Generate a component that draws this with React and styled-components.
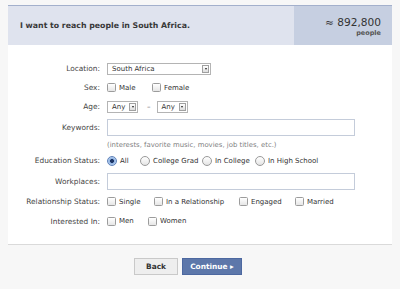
import React from 'react'
import styled, { createGlobalStyle } from 'styled-components'

const GlobalStyle = createGlobalStyle`
body {
  margin: 0;
  background: #f7f7f7;
  font-family: "DejaVu Sans", "Liberation Sans", sans-serif;
}
`

const Page = styled.div`
padding: 5px 8px 0;
`
const Panel = styled.div`
background: #fff;
border-bottom: 1px solid #dadada;
`
const Header = styled.div`
display: flex;
height: 39px;
border-top: 1px solid #a3b0cc;
`
const Headline = styled.div`
flex: 1;
display: flex;
align-items: center;
padding-left: 12px;
background: #dfe3ee;
font-size: 7.8px;
font-weight: bold;
color: #383838;
`
const Reach = styled.div`
width: 98px;
box-sizing: border-box;
padding: 1px 11px 0 0;
display: flex;
flex-direction: column;
align-items: flex-end;
justify-content: center;
background: #c6cfe1;
`
const Count = styled.div`
font-size: 10.6px;
color: #333;
line-height: 14px;
`
const Unit = styled.div`
font-size: 6.5px;
font-weight: bold;
color: #555;
line-height: 9px;
`
const Form = styled.div`
padding: 14px 0 13px;
`
const Row = styled.div`
display: grid;
grid-template-columns: 92px 1fr;
column-gap: 7px;
align-items: center;
height: ${p => p.h || 19}px;
`
const Label = styled.div`
text-align: right;
font-size: 7.4px;
color: #444;
`
const Controls = styled.div`
display: flex;
align-items: center;
font-size: 7px;
color: #333;
`
const Hint = styled.div`
font-size: 6.9px;
color: #808080;
`
const Option = styled.label`
display: flex;
align-items: center;
flex: none;
width: ${p => p.w ? p.w + 'px' : 'auto'};
`
const Box = styled.span`
width: 9px;
height: 9px;
box-sizing: border-box;
margin-right: 3px;
border: 1px solid #9c9c9c;
border-radius: 1.5px;
background: linear-gradient(#ffffff, #e6e6e6);
`
const Radio = styled.span`
width: 10px;
height: 10px;
box-sizing: border-box;
margin-right: 3px;
border-radius: 50%;
border: 1px solid ${p => p.on ? '#5f82b9' : '#9a9a9a'};
background: ${p => p.on
  ? 'radial-gradient(circle, #1c3566 0 1.6px, #8fb3e3 2.3px, #d6e5f7 100%)'
  : 'linear-gradient(#ffffff, #e4e4e4)'};
`
const Select = styled.div`
width: ${p => p.w}px;
height: 12px;
box-sizing: border-box;
display: flex;
align-items: center;
justify-content: space-between;
padding: 0 1px 0 4px;
border: 1px solid #b4b4b4;
background: #fff;
`
const Arrow = styled.span`
width: 7px;
height: 8px;
box-sizing: border-box;
border: 1px solid #a0a0a0;
background: linear-gradient(#fff, #ddd);
display: flex;
align-items: center;
justify-content: center;
&::after {
  content: "";
  border-left: 1.5px solid transparent;
  border-right: 1.5px solid transparent;
  border-top: 2px solid #222;
}
`
const Dash = styled.span`
margin: 0 6px 0 9px;
color: #555;
`
const Field = styled.div`
width: 248px;
height: 17px;
box-sizing: border-box;
border: 1px solid #c4ccda;
background: #fff;
`
const Footer = styled.div`
display: flex;
gap: 4px;
padding: 13px 0 0 126px;
`
const Button = styled.div`
width: ${p => p.w}px;
height: 17px;
box-sizing: border-box;
display: flex;
align-items: center;
justify-content: center;
font-size: 7.4px;
font-weight: bold;
color: ${p => p.primary ? '#fff' : '#333'};
background: ${p => p.primary ? '#5d77aa' : '#eeeeee'};
border: 1px solid ${p => p.primary ? '#4d68a0' : '#c9c9c9'};
`

const Check = ({ w, children }) => (
  <Option w={w}><Box />{children}</Option>
)

const Choice = ({ w, on, children }) => (
  <Option w={w}><Radio on={on} />{children}</Option>
)

const App = () => {
  return (
    <Page>
      <GlobalStyle />
      <Panel>
        <Header>
          <Headline>I want to reach people in South Africa.</Headline>
          <Reach>
            <Count>≈ 892,800</Count>
            <Unit>people</Unit>
          </Reach>
        </Header>
        <Form>
          <Row>
            <Label>Location:</Label>
            <Controls><Select w={104}>South Africa<Arrow /></Select></Controls>
          </Row>
          <Row>
            <Label>Sex:</Label>
            <Controls>
              <Check w={45}>Male</Check>
              <Check>Female</Check>
            </Controls>
          </Row>
          <Row>
            <Label>Age:</Label>
            <Controls>
              <Select w={31}>Any<Arrow /></Select>
              <Dash>–</Dash>
              <Select w={31}>Any<Arrow /></Select>
            </Controls>
          </Row>
          <Row h={22}>
            <Label>Keywords:</Label>
            <Controls><Field /></Controls>
          </Row>
          <Row h={13}>
            <span />
            <Hint>(interests, favorite music, movies, job titles, etc.)</Hint>
          </Row>
          <Row>
            <Label>Education Status:</Label>
            <Controls>
              <Choice w={33} on>All</Choice>
              <Choice w={62}>College Grad</Choice>
              <Choice w={53}>In College</Choice>
              <Choice>In High School</Choice>
            </Controls>
          </Row>
          <Row h={22}>
            <Label>Workplaces:</Label>
            <Controls><Field /></Controls>
          </Row>
          <Row>
            <Label>Relationship Status:</Label>
            <Controls>
              <Check w={47}>Single</Check>
              <Check w={85}>In a Relationship</Check>
              <Check w={56}>Engaged</Check>
              <Check>Married</Check>
            </Controls>
          </Row>
          <Row h={20}>
            <Label>Interested In:</Label>
            <Controls>
              <Check w={41}>Men</Check>
              <Check>Women</Check>
            </Controls>
          </Row>
        </Form>
      </Panel>
      <Footer>
        <Button w={44}>Back</Button>
        <Button w={60} primary>Continue ▸</Button>
      </Footer>
    </Page>
  )
}

export default App
